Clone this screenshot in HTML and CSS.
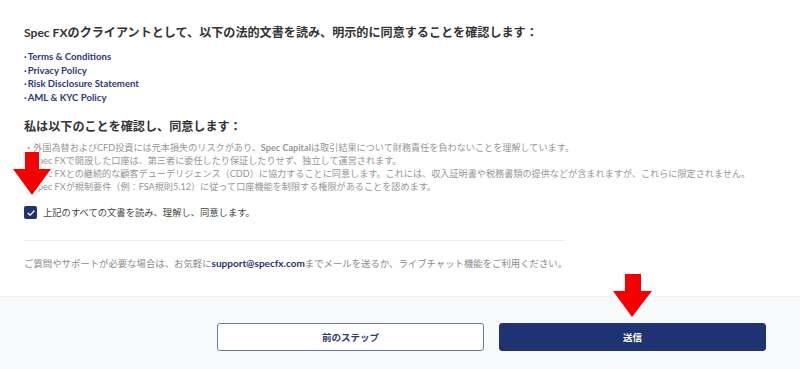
FILE: index.html
```html
<!DOCTYPE html>
<html lang="ja">
<head>
  <meta charset="UTF-8">
  <meta name="viewport" content="width=device-width, initial-scale=1.0">
  <title>Spec FX - 同意</title>
  <link rel="stylesheet" href="styles.css">
</head>
<body>
  <div class="page">
    <div class="content">
      <h2>Spec FXのクライアントとして、以下の法的文書を読み、明示的に同意することを確認します：</h2>
      <ul class="docs">
        <li><a href="#">Terms &amp; Conditions</a></li>
        <li><a href="#">Privacy Policy</a></li>
        <li><a href="#">Risk Disclosure Statement</a></li>
        <li><a href="#">AML &amp; KYC Policy</a></li>
      </ul>

      <h2 class="confirm-title">私は以下のことを確認し、同意します：</h2>
      <ul class="terms">
        <li>・外国為替およびCFD投資には元本損失のリスクがあり、<b>Spec Capital</b>は取引結果について財務責任を負わないことを理解しています。</li>
        <li>・Spec FXで開設した口座は、第三者に委任したり保証したりせず、独立して運営されます。</li>
        <li>・Spec FXとの継続的な顧客デューデリジェンス（CDD）に協力することに同意します。これには、収入証明書や税務書類の提供などが含まれますが、これらに限定されません。</li>
        <li>・Spec FXが規制要件（例：FSA規則5.12）に従って口座機能を制限する権限があることを認めます。</li>
      </ul>

      <label class="agree">
        <span class="check">
          <svg viewBox="0 0 12 12" width="10" height="10"><path d="M2.5 6.3 L5 8.6 L9.6 3.6" fill="none" stroke="#fff" stroke-width="1.6" stroke-linecap="round" stroke-linejoin="round"/></svg>
        </span>
        上記のすべての文書を読み、理解し、同意します。
      </label>

      <div class="divider"></div>

      <p class="support">ご質問やサポートが必要な場合は、お気軽に<a href="#">support@specfx.com</a>までメールを送るか、ライブチャット機能をご利用ください。</p>
    </div>

    <div class="footer">
      <button class="btn btn-outline">前のステップ</button>
      <button class="btn btn-primary">送信</button>
    </div>

    <svg class="arrow arrow-left" width="60" height="60" viewBox="0 0 60 60">
      <polygon points="13,0 27,0 27,17 39,17 20,43 1,17 13,17" fill="#f40000" stroke="#fff" stroke-width="4" stroke-linejoin="round" paint-order="stroke"/>
    </svg>
    <svg class="arrow arrow-right" width="60" height="60" viewBox="0 0 60 60">
      <polygon points="15,0 31,0 31,17 42,17 22,43 3,17 15,17" fill="#f40000" stroke="#fff" stroke-width="5" stroke-linejoin="round" paint-order="stroke"/>
    </svg>
  </div>
</body>
</html>
```

FILE: styles.css
```css
body {
  margin: 0;
  font-family: Lato, "Noto Sans CJK JP", sans-serif;
  background: #fff;
  color: #333;
}

.page {
  position: relative;
  width: 800px;
  height: 369px;
  overflow: hidden;
}

.content {
  padding: 25px 0 0 24px;
}

h2 {
  margin: 0;
  font-size: 12.1px;
  line-height: 16px;
  font-weight: 700;
  color: #333;
  white-space: nowrap;
}

.docs {
  list-style: none;
  margin: 9px 0 0;
  padding: 0;
}

.docs li {
  font-size: 9.6px;
  line-height: 13.7px;
}

.docs li::before {
  content: "·";
  color: #2b3a7a;
  margin-right: 1px;
  font-weight: 700;
}

.docs a {
  color: #2b3a7a;
  font-weight: 700;
  text-decoration: none;
}

.confirm-title {
  margin-top: 14px;
}

.terms {
  list-style: none;
  margin: 6px 0 0;
  padding: 0;
}

.terms li {
  font-size: 9.15px;
  line-height: 13px;
  color: #969696;
  white-space: nowrap;
}

.terms b {
  font-weight: 700;
}

.agree {
  display: flex;
  align-items: center;
  gap: 6px;
  margin-top: 13px;
  font-size: 9.3px;
  line-height: 14px;
  color: #444;
}

.check {
  width: 13px;
  height: 13px;
  border-radius: 2px;
  background: #1f3271;
  display: flex;
  align-items: center;
  justify-content: center;
}

.divider {
  width: 541px;
  height: 1px;
  background: #ececec;
  margin-top: 20px;
}

.support {
  margin: 16px 0 0;
  font-size: 9.4px;
  line-height: 13px;
  color: #8a8a8a;
  white-space: nowrap;
}

.support a {
  color: #1f3271;
  font-weight: 700;
  text-decoration: none;
  font-size: 10px;
}

.footer {
  position: absolute;
  left: 0;
  right: 0;
  top: 296px;
  bottom: 0;
  background: #f8f9fb;
  border-top: 1px solid #eef0f3;
  display: flex;
  justify-content: flex-end;
  align-items: flex-start;
  gap: 15px;
  padding: 26px 34px 0 0;
}

.btn {
  width: 267px;
  height: 28px;
  border-radius: 3px;
  font-family: inherit;
  font-size: 9.5px;
  font-weight: 700;
  cursor: pointer;
}

.btn-outline {
  background: #fff;
  border: 1px solid #6d7aa6;
  color: #2b3a6a;
}

.btn-primary {
  background: #1f3271;
  border: 1px solid #1f3271;
  color: #fff;
}

.arrow {
  position: absolute;
}

.arrow-left {
  left: 12px;
  top: 152px;
}

.arrow-right {
  left: 610px;
  top: 274px;
}
```
